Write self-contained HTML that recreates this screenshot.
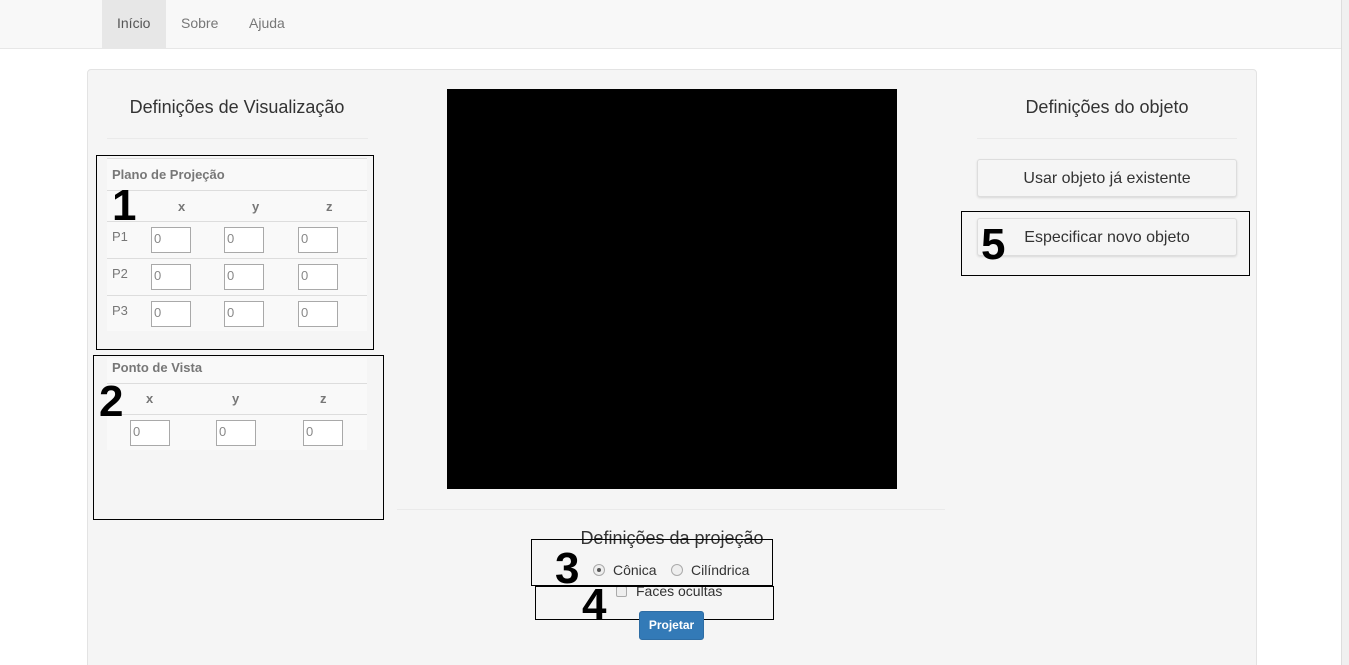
<!DOCTYPE html>
<html style="overflow:hidden;height:665px"><head><meta charset="utf-8"><style>
*{box-sizing:border-box;margin:0;padding:0}
body{width:1349px;height:665px;overflow:hidden;background:#fff;font-family:"Liberation Sans",Arial,sans-serif;color:#333;position:relative}
.a{position:absolute}
.nav{left:0;top:0;width:1341px;height:49px;background:#f8f8f8;border-bottom:1px solid #e7e7e7}
.nl{top:15px;font-size:14px;color:#777}
.panel{left:87px;top:69px;width:1170px;height:600px;background:#f5f5f5;border:1px solid #e3e3e3;border-radius:4px}
.h{font-size:18px;color:#333;text-align:center;white-space:nowrap}
.hr{height:1px;background:#eaeaea}
.tbl{background:#f9f9f9}
.line{height:1px;background:#ddd}
.th{font-size:13px;font-weight:bold;color:#777}
.inp{width:40px;height:26px;background:#fff;border:1px solid #a9a9a9;font-size:13px;color:#888;padding:3px 0 0 2px}
.pl{font-size:13px;color:#777}
.box{border:1px solid #000}
.num{font-size:44px;font-weight:bold;color:#000;line-height:1}
.btn{background:#f5f5f5;border:1px solid #ddd;border-radius:3px;box-shadow:0 1px 2px rgba(0,0,0,.12);font-size:16px;text-align:center;line-height:37px;color:#333}
</style></head><body>
<div class="a nav"></div>
<div class="a" style="left:102px;top:0;width:64px;height:48px;background:#e7e7e7"></div>
<div class="a nl" style="left:117px;color:#555">Início</div>
<div class="a nl" style="left:181px">Sobre</div>
<div class="a nl" style="left:249px">Ajuda</div>
<div class="a" style="left:1341px;top:0;width:8px;height:665px;background:#f0f0f0;border-left:1px solid #ddd"></div>
<div class="a panel"></div>

<div class="a h" style="left:107px;top:97px;width:260px">Definições de Visualização</div>
<div class="a hr" style="left:107px;top:138px;width:261px"></div>
<div class="a h" style="left:977px;top:97px;width:260px">Definições do objeto</div>
<div class="a hr" style="left:977px;top:138px;width:260px"></div>

<div class="a tbl" style="left:107px;top:158px;width:260px;height:173px"></div>
<div class="a line" style="left:107px;top:158px;width:260px"></div>
<div class="a th" style="left:112px;top:167px">Plano de Projeção</div>
<div class="a line" style="left:107px;top:190px;width:260px"></div>
<div class="a th" style="left:178px;top:199px">x</div>
<div class="a th" style="left:252px;top:199px">y</div>
<div class="a th" style="left:326px;top:199px">z</div>
<div class="a line" style="left:107px;top:221px;width:260px"></div>
<div class="a line" style="left:107px;top:258px;width:260px"></div>
<div class="a line" style="left:107px;top:295px;width:260px"></div>
<div class="a pl" style="left:112px;top:229px">P1</div>
<div class="a pl" style="left:112px;top:266px">P2</div>
<div class="a pl" style="left:112px;top:303px">P3</div>
<div class="a inp" style="left:151px;top:227px">0</div><div class="a inp" style="left:224px;top:227px">0</div><div class="a inp" style="left:298px;top:227px">0</div>
<div class="a inp" style="left:151px;top:264px">0</div><div class="a inp" style="left:224px;top:264px">0</div><div class="a inp" style="left:298px;top:264px">0</div>
<div class="a inp" style="left:151px;top:301px">0</div><div class="a inp" style="left:224px;top:301px">0</div><div class="a inp" style="left:298px;top:301px">0</div>
<div class="a box" style="left:96px;top:155px;width:278px;height:195px"></div>
<div class="a num" style="left:112px;top:184px">1</div>

<div class="a tbl" style="left:107px;top:358px;width:260px;height:92px"></div>
<div class="a th" style="left:112px;top:360px">Ponto de Vista</div>
<div class="a line" style="left:107px;top:383px;width:260px"></div>
<div class="a th" style="left:146px;top:391px">x</div>
<div class="a th" style="left:232px;top:391px">y</div>
<div class="a th" style="left:320px;top:391px">z</div>
<div class="a line" style="left:107px;top:414px;width:260px"></div>
<div class="a inp" style="left:130px;top:420px">0</div><div class="a inp" style="left:216px;top:420px">0</div><div class="a inp" style="left:303px;top:420px">0</div>
<div class="a box" style="left:93px;top:355px;width:291px;height:165px"></div>
<div class="a num" style="left:99px;top:380px">2</div>

<div class="a" style="left:447px;top:89px;width:450px;height:400px;background:#000"></div>
<div class="a hr" style="left:397px;top:509px;width:548px"></div>

<div class="a btn" style="left:977px;top:159px;width:260px;height:38px">Usar objeto já existente</div>
<div class="a btn" style="left:977px;top:218px;width:260px;height:38px">Especificar novo objeto</div>
<div class="a box" style="left:961px;top:211px;width:289px;height:65px"></div>
<div class="a num" style="left:981px;top:223px">5</div>

<div class="a h" style="left:572px;top:528px;width:200px">Definições da projeção</div>
<div class="a" style="left:593px;top:564px;width:12px;height:12px;border:1px solid #aaa;border-radius:50%;background:#eee"><div style="margin:3px;width:4px;height:4px;border-radius:50%;background:#555"></div></div>
<div class="a" style="left:613px;top:562px;font-size:14px">Cônica</div>
<div class="a" style="left:671px;top:564px;width:12px;height:12px;border:1px solid #aaa;border-radius:50%;background:#eee"></div>
<div class="a" style="left:691px;top:562px;font-size:14px">Cilíndrica</div>
<div class="a" style="left:616px;top:586px;width:11px;height:11px;border:1px solid #aaa;border-radius:2px;background:#eee"></div>
<div class="a" style="left:636px;top:583px;font-size:14px">Faces ocultas</div>
<div class="a box" style="left:531px;top:539px;width:242px;height:47px"></div>
<div class="a box" style="left:535px;top:586px;width:239px;height:34px"></div>
<div class="a num" style="left:555px;top:547px">3</div>
<div class="a num" style="left:582px;top:583px">4</div>
<div class="a" style="left:639px;top:611px;width:65px;height:29px;background:#337ab7;border:1px solid #2e6da4;border-radius:3px;color:#fff;font-size:12px;font-weight:bold;text-align:center;line-height:27px">Projetar</div>
</body></html>
